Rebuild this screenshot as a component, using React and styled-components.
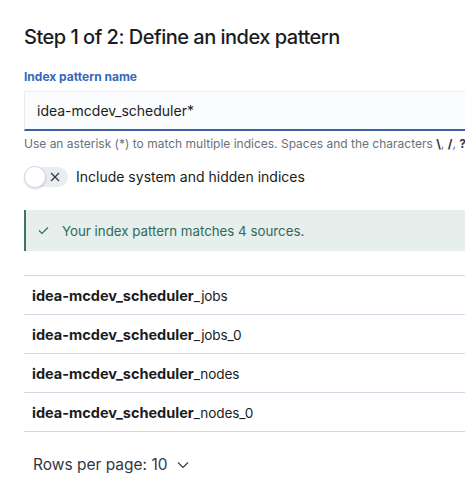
import React from 'react';
import styled, { createGlobalStyle } from 'styled-components';

const GlobalStyle = createGlobalStyle`
  html, body {
    margin: 0;
    padding: 0;
    background: #ffffff;
    overflow: hidden;
  }
  body {
    font-family: Inter, "Noto Sans", "Liberation Sans", sans-serif;
    color: #1a1c21;
    -webkit-font-smoothing: antialiased;
  }
`;

const Page = styled.div`
  width: 640px;
  padding: 23px 0 0 24px;
  box-sizing: border-box;
`;

const Title = styled.h2`
  margin: 0 0 16px;
  font-size: 20px;
  line-height: 28px;
  font-weight: 500;
  letter-spacing: -0.025em;
  color: #1a1c21;
`;

const Field = styled.div`
  display: flex;
  flex-direction: column;
`;

const Label = styled.label`
  font-size: 12px;
  line-height: 20px;
  font-weight: 700;
  color: #3568b8;
  margin-bottom: 4px;
`;

const Input = styled.div`
  height: 40px;
  box-sizing: border-box;
  background: #fbfcfd;
  border-top: 1px solid #e9ebef;
  border-left: 1px solid #e9ebef;
  border-bottom: 2px solid #3a5fa7;
  padding: 0 12px;
  display: flex;
  align-items: center;
  font-size: 14px;
  color: #1a1c21;
`;

const Help = styled.div`
  margin-top: 3px;
  font-size: 12px;
  line-height: 20px;
  color: #69707d;
  white-space: nowrap;
  b {
    color: #343741;
  }
`;

const SwitchRow = styled.div`
  display: flex;
  align-items: center;
  gap: 8px;
  margin-top: 13px;
  font-size: 14px;
  line-height: 20px;
`;

const Track = styled.span`
  position: relative;
  width: 44px;
  height: 20px;
  border-radius: 10px;
  background: #e9ecf1;
  display: inline-flex;
  align-items: center;
  justify-content: flex-end;
  padding-right: 8px;
  box-sizing: border-box;
`;

const Knob = styled.span`
  position: absolute;
  left: 0;
  top: -1px;
  width: 22px;
  height: 22px;
  border-radius: 50%;
  background: #fff;
  border: 1px solid #d3dae6;
  box-sizing: border-box;
  box-shadow: 0 1px 2px rgba(0, 0, 0, 0.15);
`;

const Callout = styled.div`
  margin-top: 23px;
  height: 41px;
  background: #e6efec;
  border-left: 2px solid #3f7567;
  display: flex;
  align-items: center;
  gap: 13px;
  padding-left: 12px;
  font-size: 13.3px;
  color: #2f6a5c;
`;

const Table = styled.div`
  margin-top: 24px;
  border-top: 1px solid #d3dae6;
`;

const Row = styled.div`
  height: 38px;
  border-bottom: 1px solid #d3dae6;
  display: flex;
  align-items: center;
  padding-left: 8px;
  color: #1a1c21;
`;

const Name = styled.span`
  font-size: 13.6px;
  letter-spacing: -0.01em;
  b {
    font-size: 14.5px;
    letter-spacing: 0;
    font-weight: 700;
  }
`;

const Pager = styled.div`
  display: flex;
  align-items: center;
  gap: 9px;
  margin-top: 23px;
  padding-left: 9px;
  font-size: 15.5px;
  color: #343741;
`;

const rows = ['jobs', 'jobs_0', 'nodes', 'nodes_0'];

export default function App() {
  return (
    <>
      <GlobalStyle />
      <Page>
        <Title>Step 1 of 2: Define an index pattern</Title>
        <Field>
          <Label>Index pattern name</Label>
          <Input>idea-mcdev_scheduler*</Input>
          <Help>
            Use an asterisk (*) to match multiple indices. Spaces and the characters <b>\</b>, <b>/</b>, <b>?</b>, <b>"</b>, <b>&lt;</b>, <b>&gt;</b>, <b>|</b> are not allowed.
          </Help>
        </Field>
        <SwitchRow>
          <Track>
            <Knob />
            <svg width="10" height="10" viewBox="0 0 10 10">
              <path d="M1 1L9 9M9 1L1 9" stroke="#343741" strokeWidth="1.2" fill="none" />
            </svg>
          </Track>
          Include system and hidden indices
        </SwitchRow>
        <Callout>
          <svg width="11" height="9" viewBox="0 0 11 9">
            <path d="M1 4.5L4 7.5L10 1.5" stroke="#2f6a5c" strokeWidth="1.1" fill="none" />
          </svg>
          Your index pattern matches 4 sources.
        </Callout>
        <Table>
          {rows.map(r => (
            <Row key={r}>
              <Name>
                <b>idea-mcdev_scheduler</b>_{r}
              </Name>
            </Row>
          ))}
        </Table>
        <Pager>
          Rows per page: 10
          <svg width="12" height="8" viewBox="0 0 12 8">
            <path d="M1 1.5L6 6.5L11 1.5" stroke="#343741" strokeWidth="1.1" fill="none" />
          </svg>
        </Pager>
      </Page>
    </>
  );
}
